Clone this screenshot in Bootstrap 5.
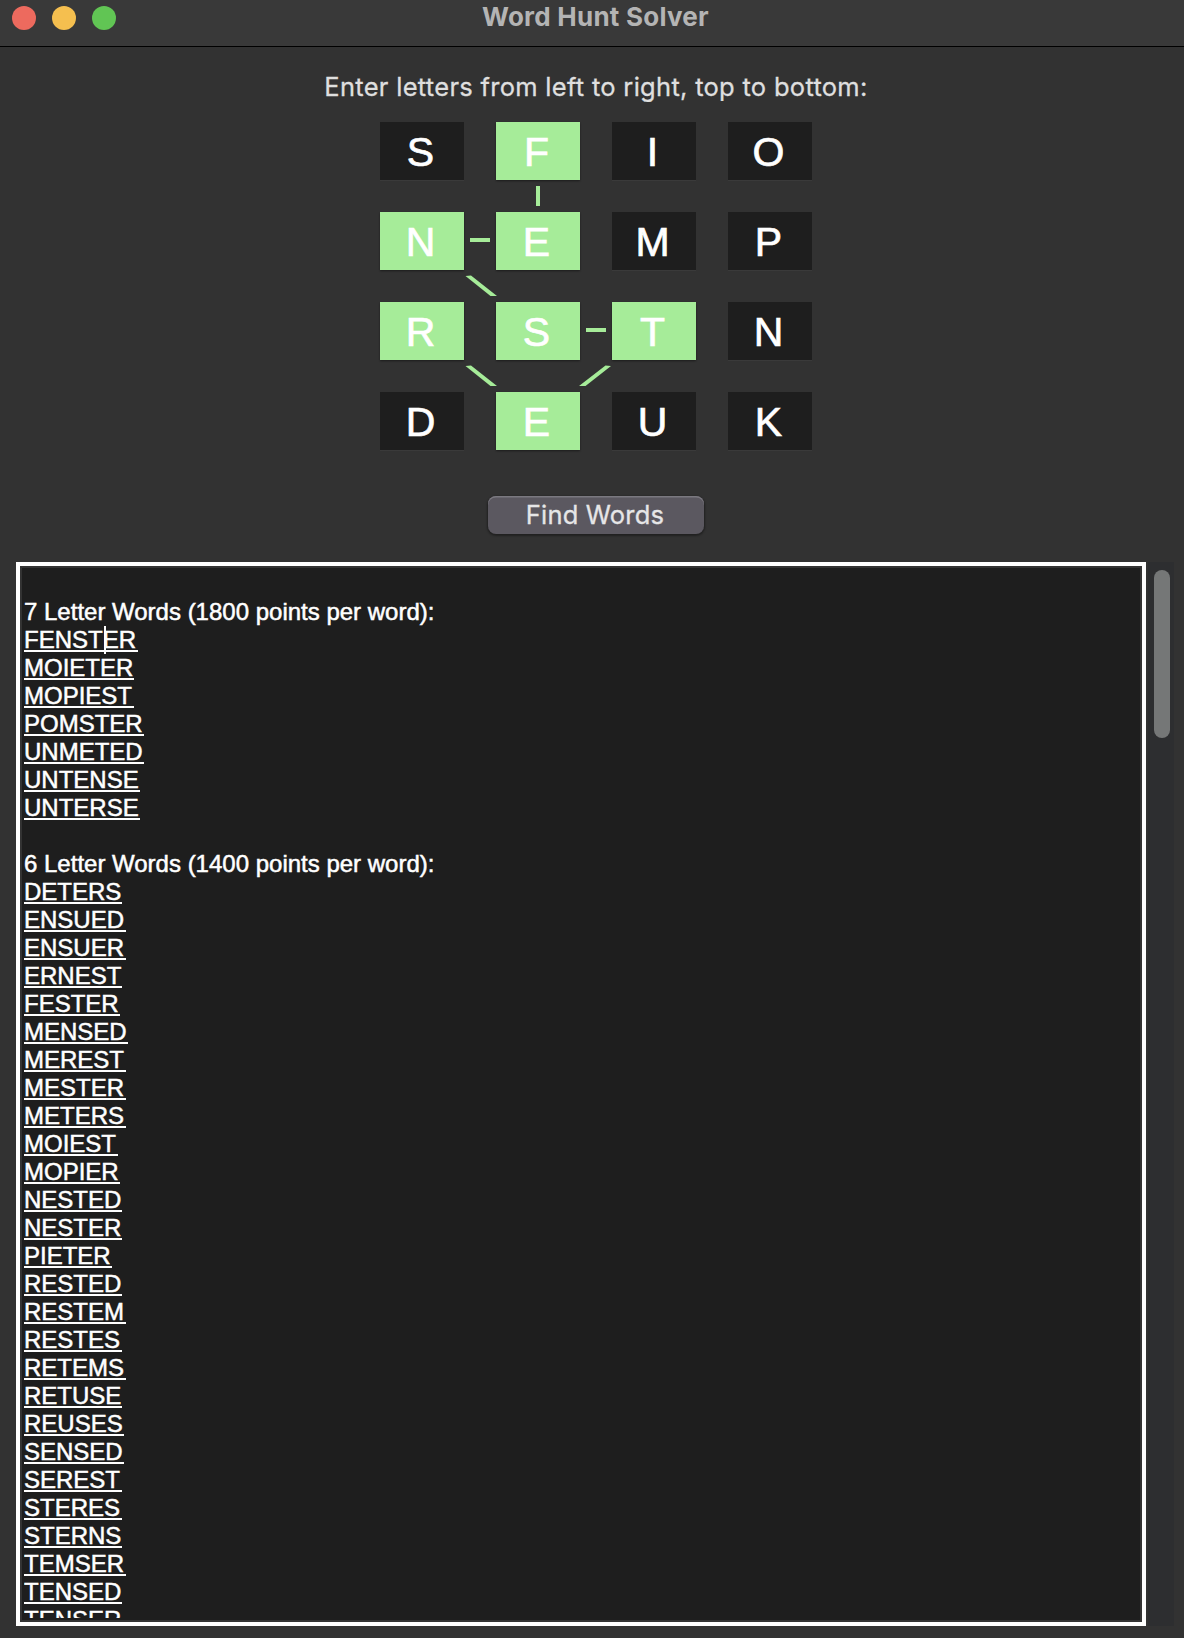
<!DOCTYPE html>
<html lang="en" data-bs-theme="dark">
<head>
<meta charset="utf-8">
<meta name="viewport" content="width=device-width, initial-scale=1">
<title>Word Hunt Solver</title>
<link href="https://cdn.jsdelivr.net/npm/bootstrap@5.3.0/dist/css/bootstrap.min.css" rel="stylesheet">
<style>
  body { background: #323232; color: #fff; font-family: Inter, "Liberation Sans", sans-serif; }
  .app-window { height: 1638px; }
  .title-bar { height: 47px; background: #393939; border-bottom: 1px solid #000; padding: 6px 12px; }
  .lights { gap: 16px; }
  .light { width: 24px; height: 24px; border-radius: 50%; }
  .light-close { background: #ed6a5e; }
  .light-min { background: #f5bf4f; }
  .light-zoom { background: #61c554; }
  .window-title { font-size: 26px; font-weight: 700; line-height: 32px; color: #b4b4b4; margin: -5px 0 0 366px; letter-spacing: .24px; white-space: nowrap; }
  .prompt { font-size: 25.5px; line-height: 32px; color: #dfdfdf; padding-top: 24px; padding-left: 8px; height: 75px; letter-spacing: .29px; -webkit-text-stroke: .3px #dfdfdf; white-space: nowrap; }
  .board { width: 432px; height: 328px; margin-left: 380px; }
  .board-grid { display: grid; grid-template-columns: repeat(4, 84px); grid-auto-rows: 58px; gap: 32px; }
  .tile { background: #1e1e1e; font: 41px/58px "Liberation Sans", sans-serif; -webkit-text-stroke: .7px #fff; text-align: center; padding-top: 1px; padding-right: 3px; box-shadow: 0 1px 1px rgba(255,255,255,.04); }
  .tile.on { background: #a6ec99; box-shadow: 0 1px 2px rgba(0,0,0,.45); }
  .links { left: 0; top: 0; fill: #a6ec99; }
  .find-btn { width: 216px; height: 38px; margin: 46px 0 0 488px; padding: 0 2px 0 0; border: 0; border-radius: 8px; background: #5b5860; color: #e6e6e7; font-size: 25.5px; line-height: 36px; letter-spacing: .18px; -webkit-text-stroke: .3px #e6e6e7; box-shadow: inset 0 1.5px 0 #7b7980, 0 1px 2px 1px rgba(0,0,0,.35); }
  .find-btn:hover { background: #64616a; color: #fff; }
  .results-row { margin: 28px 10px 0 16px; height: 1064px; gap: 2px; }
  .results { width: 1130px; border: 4px solid #fff; background: #333; padding: 2px; }
  .results-inner { background: #1e1e1e; padding: 2px; height: 1052px; }
  .results-text { height: 1048px; overflow: hidden; font: 24px/28px "Liberation Sans", sans-serif; -webkit-text-stroke: .5px #fff; }
  .results-text > div { height: 28px; white-space: pre; }
  .found { display: inline-block; height: 26px; border-bottom: 2px solid #fff; }
  .caret { left: 80px; top: 0; width: 2px; height: 28px; background: #fff; }
  .track { width: 26px; background: #2d2e30; padding: 8px 4px 0 6px; }
  .thumb { height: 168px; border-radius: 8px; background: #757777; }
</style>
</head>
<body>
<main class="app-window overflow-hidden">
  <header class="title-bar d-flex align-items-start">
    <div class="lights d-flex">
      <span class="light light-close"></span><span class="light light-min"></span><span class="light light-zoom"></span>
    </div>
    <h1 class="window-title">Word Hunt Solver</h1>
  </header>

  <div class="prompt text-center">Enter letters from left to right, top to bottom:</div>

  <section class="board position-relative">
    <div class="board-grid">
      <div class="tile">S</div><div class="tile on">F</div><div class="tile">I</div><div class="tile">O</div>
      <div class="tile on">N</div><div class="tile on">E</div><div class="tile">M</div><div class="tile">P</div>
      <div class="tile on">R</div><div class="tile on">S</div><div class="tile on">T</div><div class="tile">N</div>
      <div class="tile">D</div><div class="tile on">E</div><div class="tile">U</div><div class="tile">K</div>
    </div>
    <svg class="links position-absolute" width="432" height="328" viewBox="380 122 432 328" aria-hidden="true">
      <path d="M536 186h4v20h-4zM470 238h20v4h-20zM586 328h20v4h-20z"/>
      <path d="M465.5 276L471 275.5L497 296H490.5zM465.5 366L471 365.500L497 386H490.500zM611 366L605.500 365.500L579 386H585.500z"/>
    </svg>
  </section>

  <button class="btn find-btn d-block" type="button">Find Words</button>

  <section class="results-row d-flex">
    <div class="results">
      <div class="results-inner"><div class="results-text" id="results"></div></div>
    </div>
    <div class="track"><div class="thumb"></div></div>
  </section>
</main>
<script src="https://cdn.jsdelivr.net/npm/bootstrap@5.3.0/dist/js/bootstrap.bundle.min.js"></script>
<script>
  const groups = [
    ["7 Letter Words (1800 points per word):", "FENSTER MOIETER MOPIEST POMSTER UNMETED UNTENSE UNTERSE"],
    ["6 Letter Words (1400 points per word):", "DETERS ENSUED ENSUER ERNEST FESTER MENSED MEREST MESTER METERS MOIEST MOPIER NESTED NESTER PIETER RESTED RESTEM RESTES RETEMS RETUSE REUSES SENSED SEREST STERES STERNS TEMSER TENSED TENSER"]
  ];
  const box = document.getElementById("results");
  const addLine = () => box.appendChild(document.createElement("div"));
  groups.forEach(([heading, words]) => {
    addLine();
    addLine().textContent = heading;
    words.split(" ").forEach(word => {
      const line = addLine();
      const span = document.createElement("span");
      span.className = "found";
      span.textContent = word;
      line.appendChild(span);
      // underline runs to the next even pixel past the word
      const w = span.getBoundingClientRect().width;
      span.style.width = Math.floor((w + 0.1) / 2) * 2 + 2 + "px";
      if (word === "FENSTER") {
        line.className = "position-relative";
        const caret = document.createElement("span");
        caret.className = "caret position-absolute";
        line.appendChild(caret);
      }
    });
  });
</script>
</body>
</html>
